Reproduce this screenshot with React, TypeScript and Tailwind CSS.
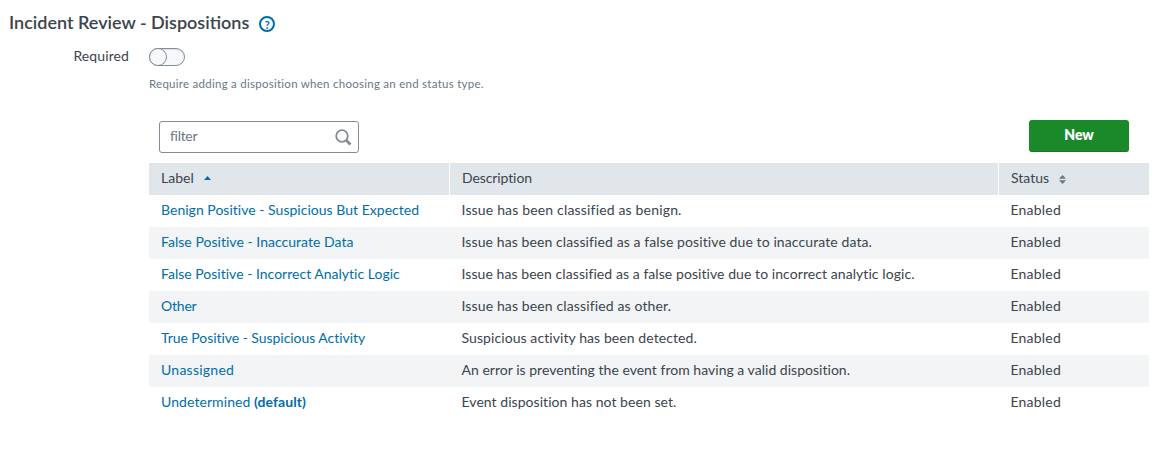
import React from "react";

type Disposition = { label: string; tracking: string; isDefault?: boolean; description: string; descTracking: string };

const rows: Disposition[] = [
  { label: "Benign Positive - Suspicious But Expected", tracking: "tracking-[0.02px]", description: "Issue has been classified as benign.", descTracking: "tracking-[0.17px]" },
  { label: "False Positive - Inaccurate Data", tracking: "tracking-[0.03px]", description: "Issue has been classified as a false positive due to inaccurate data.", descTracking: "tracking-[0.1px]" },
  { label: "False Positive - Incorrect Analytic Logic", tracking: "tracking-[0.01px]", description: "Issue has been classified as a false positive due to incorrect analytic logic.", descTracking: "tracking-[0.07px]" },
  { label: "Other", tracking: "tracking-[-0.2px]", description: "Issue has been classified as other.", descTracking: "tracking-[0.13px]" },
  { label: "True Positive - Suspicious Activity", tracking: "tracking-[-0.05px]", description: "Suspicious activity has been detected.", descTracking: "tracking-[0.08px]" },
  { label: "Unassigned", tracking: "tracking-[0.25px]", description: "An error is preventing the event from having a valid disposition.", descTracking: "tracking-[0.02px]" },
  { label: "Undetermined", tracking: "tracking-[0.08px]", isDefault: true, description: "Event disposition has not been set.", descTracking: "tracking-[0.05px]" },
];

const columns = "grid grid-cols-[301px_549px_150px]";

export default function App() {
  return (
    <main className="h-[454px] w-[1165px] overflow-hidden bg-white font-['Lato',sans-serif] text-[14px] leading-5 text-[#3c444d]">
      <header className="flex h-[46px] items-center pl-[9px]">
        <h1 className="pb-[2px] text-[18px] leading-6 font-semibold tracking-[0px] whitespace-nowrap">Incident Review - Dispositions</h1>
        <a href="#help" aria-label="Help" className="mt-[2px] ml-[10px] flex size-4 items-center justify-center rounded-full border-2 border-[#006eaa] text-[11px] leading-none font-bold text-[#006eaa]">?</a>
      </header>

      <div className="flex h-[22px] items-center">
        <label className="w-[129px] pb-[2px] text-right tracking-[0.1px]">Required</label>
        <button role="switch" aria-checked="false" aria-label="Required" className="ml-5 flex h-[18px] w-9 items-center rounded-full border border-[#818d99] bg-[#f7f8fa] shadow-[inset_0_1px_1px_#dce0e4]">
          <span className="-ml-px size-[18px] rounded-full border border-[#818d99] bg-[#f7f8fa]" />
        </button>
      </div>
      <p className="mt-[6px] ml-[149px] text-[11.5px] leading-5 tracking-[0.26px] text-[#6b7785]">
        <span>Require adding a disposition when choosing an end status type.</span>
      </p>

      <section className="mt-[26px] ml-[149px] w-[1000px]">
        <div className="flex h-[43px] items-start justify-between pr-5 pl-[10px]">
          <div className="mt-px flex h-8 w-[200px] items-center justify-between rounded-[3px] border border-[#818d99] pr-[6px] pl-[10px]">
            <span className="pb-[2px] tracking-[-0.3px] text-[#6b7785]">filter</span>
            <svg width="17" height="17" viewBox="0 0 17 17" fill="none" stroke="#818d99">
              <circle cx="7" cy="7" r="5.8" strokeWidth="1.8" />
              <path d="M11.2 11.2L15.4 15.4" strokeWidth="2.8" />
            </svg>
          </div>
          <button className="h-8 w-[100px] rounded-[3px] border-b border-[#157a22] bg-[#1a8929] pb-px font-extrabold tracking-[0px] text-white">New</button>
        </div>

        <div className={`${columns} h-8 bg-[#e1e6eb]`}>
          <div className="flex items-center border-r border-white pl-3">
            <span className="pb-[2px] tracking-[0px]">Label</span>
            <svg className="mb-[3px] ml-[10px]" width="7" height="4" viewBox="0 0 7 4"><path d="M0 4L3.5 0L7 4Z" fill="#006eaa" /></svg>
          </div>
          <div className="flex items-center border-r border-white pl-3"><span className="pb-[2px] tracking-[-0.1px]">Description</span></div>
          <div className="flex items-center pl-3">
            <span className="pb-[2px] tracking-[0px]">Status</span>
            <svg className="ml-[10px]" width="7" height="9" viewBox="0 0 7 9"><path d="M0 3.8L3.5 0L7 3.8ZM0 5.2L3.5 9L7 5.2Z" fill="#6b7785" /></svg>
          </div>
        </div>
        {rows.map((row) => (
          <div key={row.label} className={`${columns} h-8 items-center pb-[2px] even:bg-[#f2f4f5]`}>
            <div className="pl-3 whitespace-nowrap text-[#006eaa]">
              <a href="#disposition" className={row.tracking}>{row.label}{row.isDefault && <b> (default)</b>}</a>
            </div>
            <div className="pl-[11.5px] whitespace-nowrap"><span className={row.descTracking}>{row.description}</span></div>
            <div className="pl-[11.5px]"><span className="tracking-[0.2px]">Enabled</span></div>
          </div>
        ))}
      </section>
    </main>
  );
}
